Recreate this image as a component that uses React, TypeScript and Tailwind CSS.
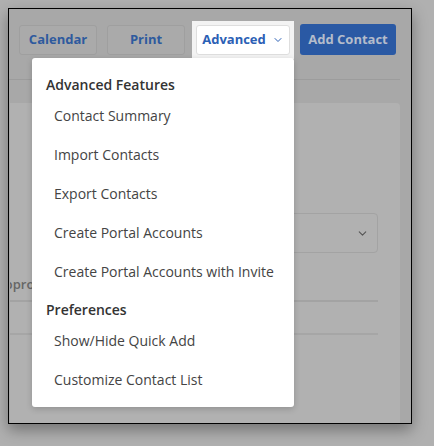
import { ChevronDown } from "lucide-react"

const advanced = [
    "Contact Summary",
    "Import Contacts",
    "Export Contacts",
    "Create Portal Accounts",
    "Create Portal Accounts with Invite",
]

const prefs = ["Show/Hide Quick Add", "Customize Contact List"]

const font = { fontFamily: '"Open Sans", "Liberation Sans", sans-serif' }

const MenuItem = ({ label }: { label: string }) => (
    <div className="h-[39px] flex items-center pl-[22px] text-[14px] text-[#444]">{label}</div>
)

const MenuHeading = ({ label }: { label: string }) => (
    <div className="h-[23px] flex items-center pl-[14px] text-[14px] font-semibold text-[#333]">{label}</div>
)

export default function App() {
    return (
        <div className="w-[434px] h-[446px] bg-[#b0b0b0] pt-[8px] pl-[8px] overflow-hidden" style={font}>
            <div className="relative w-[404px] h-[416px] border border-black bg-[#a8a8a8] shadow-[0_6px_14px_rgba(0,0,0,0.35)] flex flex-col">
                {/* toolbar */}
                <div className="flex items-center pt-[11px] pl-[10px] h-[50px]">
                    <button className="w-[78px] h-[30px] rounded-[3px] border border-[#9f9f9f] bg-[#aaaaaa] text-[13px] font-bold text-[#2e5a9e]">
                        Calendar
                    </button>
                    <button className="ml-[10px] w-[78px] h-[30px] rounded-[3px] border border-[#9f9f9f] bg-[#aaaaaa] text-[13px] font-bold text-[#2e5a9e]">
                        Print
                    </button>
                    <div className="ml-[7px] w-[102px] h-[38px] bg-[#f3f3f3] flex items-center justify-center">
                        <button className="w-[94px] h-[30px] rounded-[3px] border border-[#dedede] bg-white text-[13px] font-bold text-[#2b60b5] flex items-center justify-center gap-[6px]">
                            Advanced
                            <ChevronDown size={12} strokeWidth={2} className="text-[#2b60b5]" />
                        </button>
                    </div>
                    <button className="ml-[6px] w-[96px] h-[31px] rounded-[3px] bg-[#2a59a4] text-[13px] font-bold text-[#b4bccb]">
                        Add Contact
                    </button>
                </div>
                <div className="mt-[20px] mr-[11px] h-px bg-[#9c9c9c]" />

                {/* page body */}
                <div className="flex flex-1 mt-[23px]">
                    <div className="flex-1 ml-px bg-[#b1b1b1] rounded-tr-[4px] pt-[110px] pr-[22px] overflow-hidden">
                        <div className="ml-auto w-[340px] h-[40px] rounded-[4px] border border-[#a3a3a3] flex items-center justify-end pr-[8px]">
                            <ChevronDown size={13} strokeWidth={2} className="text-[#555]" />
                        </div>
                        <div className="relative h-[42px] mt-[5px]">
                            <span className="absolute left-[-14px] top-[17px] text-[13px] font-semibold text-[#666]">Approval Status</span>
                            <span className="absolute left-[230px] top-[17px] text-[13px] font-semibold text-[#777]">Region</span>
                        </div>
                        <div className="h-[2px] bg-[#a3a3a3]" />
                        <div className="h-[31px]" />
                        <div className="h-[2px] bg-[#a6a6a6]" />
                    </div>
                    <div className="w-[11px]" />
                </div>

                {/* dropdown */}
                <div className="absolute left-[23px] top-[49px] w-[262px] h-[349px] bg-white rounded-[3px] shadow-[0_2px_6px_rgba(0,0,0,0.18)] pt-[15px]">
                    <MenuHeading label="Advanced Features" />
                    {advanced.map((a) => (
                        <MenuItem key={a} label={a} />
                    ))}
                    <div className="mt-[7px]">
                        <MenuHeading label="Preferences" />
                    </div>
                    {prefs.map((p) => (
                        <MenuItem key={p} label={p} />
                    ))}
                </div>
            </div>
        </div>
    )
}
